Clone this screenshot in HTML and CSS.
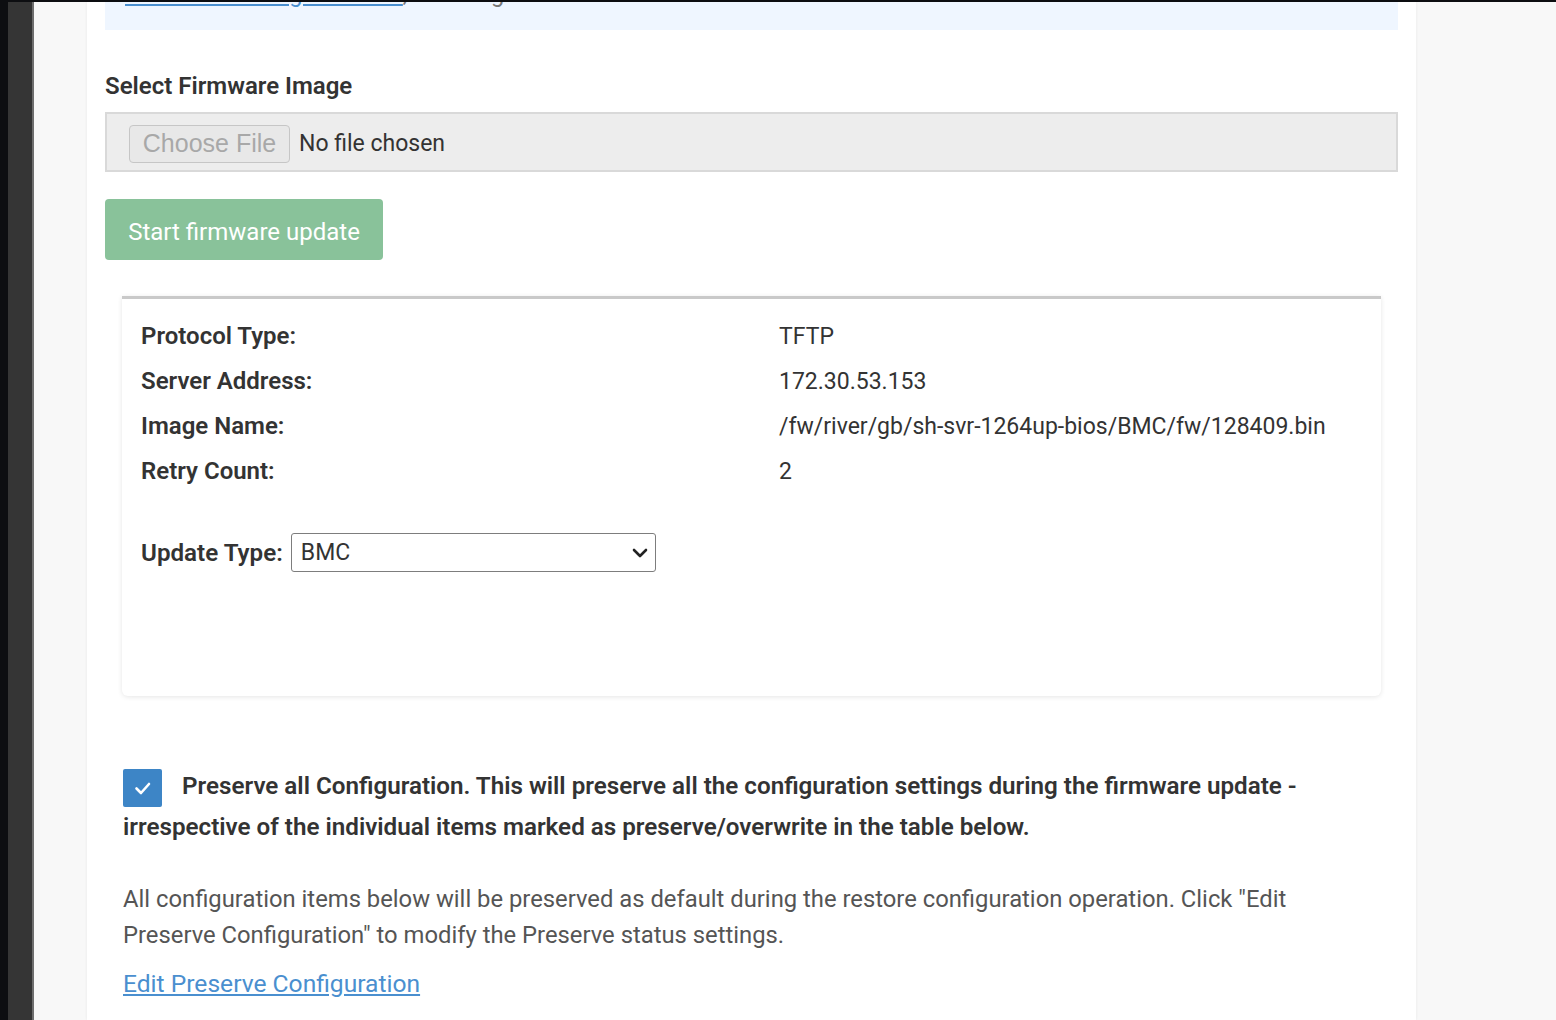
FILE: index.html
```html
<!DOCTYPE html>
<html lang="en">
<head>
<meta charset="utf-8">
<title>Firmware Update</title>
<link rel="stylesheet" href="styles.css">
</head>
<body>
<div class="frame">
  <aside class="rail"></aside>
  <div class="stage">
    <main class="panel">
      <div class="alert">
        <p class="alert-text"><a class="alert-link" href="#">Firmware Settings Window</a>, to change it.</p>
      </div>

      <h2 class="field-label">Select Firmware Image</h2>
      <div class="file-box">
        <span class="file-btn">Choose File</span>
        <span class="file-name">No file chosen</span>
      </div>

      <button class="btn-start" type="button">Start firmware update</button>

      <section class="card">
        <dl class="info-grid">
          <dt>Protocol Type:</dt><dd>TFTP</dd>
          <dt>Server Address:</dt><dd>172.30.53.153</dd>
          <dt>Image Name:</dt><dd>/fw/river/gb/sh-svr-1264up-bios/BMC/fw/128409.bin</dd>
          <dt>Retry Count:</dt><dd>2</dd>
        </dl>
        <div class="update-row">
          <span class="update-label">Update Type:</span>
          <div class="select">
            <span>BMC</span>
            <svg class="chev" width="16" height="10" viewBox="0 0 16 10"><polyline points="2,2 8,8 14,2" fill="none" stroke="#222" stroke-width="2.6" stroke-linecap="round" stroke-linejoin="round"/></svg>
          </div>
        </div>
      </section>

      <div class="preserve">
        <p class="preserve-line"><span class="check"><svg width="39" height="38" viewBox="0 0 39 38"><polyline points="13.5,19.5 18,24 26,15" fill="none" stroke="#fff" stroke-width="2.6" stroke-linecap="round" stroke-linejoin="round"/></svg></span>Preserve all Configuration. This will preserve all the configuration settings during the firmware update -<br>irrespective of the individual items marked as preserve/overwrite in the table below.</p>
        <p class="note">All configuration items below will be preserved as default during the restore configuration operation. Click "Edit<br>Preserve Configuration" to modify the Preserve status settings.</p>
        <a class="edit-link" href="#">Edit Preserve Configuration</a>
      </div>
    </main>
    <div class="right-pane"></div>
  </div>
</div>
</body>
</html>
```

FILE: styles.css
```css
* { box-sizing: border-box; }

html, body {
  margin: 0;
  padding: 0;
  height: 100%;
}

body {
  background: #0d0e11;
  font-family: Roboto, "Liberation Sans", sans-serif;
  font-size: 23px;
  color: #333;
  overflow: hidden;
}

.frame {
  display: flex;
  height: 1020px;
  padding-top: 2px;
  background: #0d0e11;
  overflow: hidden;
}

.rail {
  margin-left: 8px;
  width: 26px;
  flex: none;
  background: #353535;
  border-right: 2px solid #6e6e6e;
}

.stage {
  flex: 1;
  display: flex;
  background: #f8f8f8;
  padding-left: 53px;
}

.panel {
  width: 1329px;
  flex: none;
  background: #fff;
  padding: 0 18px;
  box-shadow: 0 0 3px rgba(0, 0, 0, 0.07);
}

.right-pane {
  flex: 1;
}

/* alert (scrolled off the top) */
.alert {
  height: 28px;
  background: #eff6ff;
  overflow: hidden;
  display: flex;
  flex-direction: column;
  justify-content: flex-end;
  padding: 0 20px 24px;
}

.alert-text {
  margin: 0;
  font-size: 23.5px;
  line-height: 23px;
  color: #777;
  white-space: nowrap;
}

.alert-link {
  color: #4a8fcf;
  text-decoration: underline;
}

/* firmware image */
.field-label {
  margin: 38px 0 8px;
  font-size: 24px;
  line-height: 36px;
  font-weight: 600;
  color: #333;
}

.file-box {
  height: 60px;
  background: #ededed;
  border: 2px solid #d9d9d9;
  display: flex;
  align-items: center;
  padding: 3px 0 0 22px;
}

.file-btn {
  display: inline-flex;
  align-items: center;
  justify-content: center;
  width: 161px;
  height: 38px;
  background: #e8e8e8;
  border: 1px solid #c6c6c6;
  border-radius: 4px;
  font-family: "Liberation Sans", Arial, sans-serif;
  font-size: 25px;
  color: #a8a8a8;
}

.file-name {
  margin-left: 9px;
  color: #333;
}

.btn-start {
  display: block;
  margin-top: 27px;
  width: 278px;
  height: 61px;
  background: #89c29a;
  color: #fff;
  border: none;
  border-radius: 4px;
  font-family: Roboto, "Liberation Sans", sans-serif;
  font-size: 24px;
  padding: 4px 0 0;
}

/* info card */
.card {
  margin: 36px 17px 0;
  border-top: 3px solid #c9c9c9;
  border-radius: 0 0 6px 6px;
  box-shadow: 0 1px 5px rgba(0, 0, 0, 0.1);
  padding: 15px 19px 124px;
}

.info-grid {
  margin: 0;
  display: grid;
  grid-template-columns: 638px 1fr;
  line-height: 45px;
}

.info-grid dt {
  font-size: 24px;
  font-weight: 600;
  color: #333;
}

.info-grid dd {
  margin: 0;
  color: #333;
}

.update-row {
  margin-top: 39px;
  display: flex;
  align-items: center;
  gap: 8px;
}

.update-label {
  font-size: 24.2px;
  font-weight: 600;
}

.select {
  width: 365px;
  height: 39px;
  border: 1px solid #7d7d7d;
  border-radius: 3px;
  display: flex;
  align-items: center;
  justify-content: space-between;
  padding: 0 7px 0 9px;
  color: #333;
}

/* preserve section */
.preserve {
  margin: 70px 20px 0 18px;
}

.preserve-line {
  margin: 0;
  font-size: 24.2px;
  line-height: 41px;
  font-weight: 600;
  color: #333;
  white-space: nowrap;
}

.check {
  display: inline-block;
  width: 39px;
  height: 38px;
  background: #3d85c6;
  border-radius: 2px;
  vertical-align: middle;
  margin: 0 20px 0 0;
}

.check svg {
  display: block;
}

.note {
  margin: 33px 0 0;
  font-size: 23.8px;
  line-height: 36px;
  color: #555;
  white-space: nowrap;
}

.edit-link {
  display: inline-block;
  margin-top: 13px;
  font-size: 24.6px;
  line-height: 36px;
  color: #4a8fcf;
  text-decoration: underline;
}
```
